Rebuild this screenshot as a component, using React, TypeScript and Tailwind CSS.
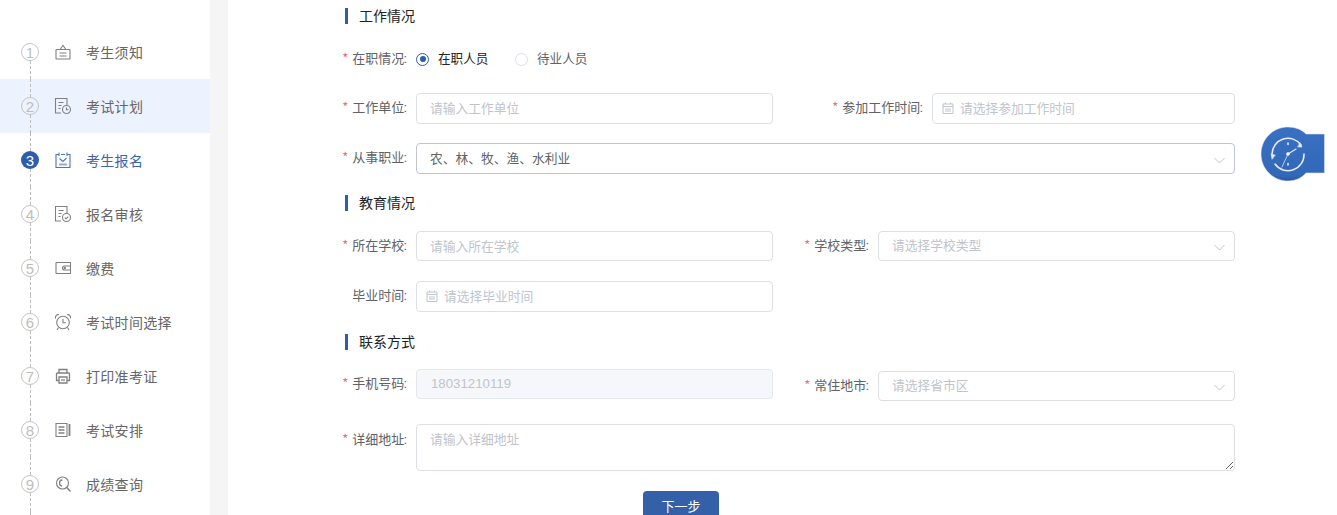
import React from 'react';

const FONT = 'font-["Microsoft_YaHei","Noto_Sans_CJK_SC","Noto_Sans",sans-serif]';

const iconProps = {
  width: 20,
  height: 20,
  viewBox: '0 0 20 20',
  fill: 'none',
  stroke: 'currentColor',
  strokeWidth: 1.1,
};

const NoticeIcon = () => (
  <svg {...iconProps}>
    <path d="M3.500 7.500h13a.5.5 0 0 1 .5.5v8.500a.5.5 0 0 1-.5.5h-13a.5.5 0 0 1-.5-.5V8a.5.5 0 0 1 .5-.5z" />
    <path d="M7 7.500 10 3.500l3 4M6.500 11h7M6.500 14h7" />
  </svg>
);

const PlanIcon = () => (
  <svg {...iconProps}>
    <path d="M8 17H2.500V2.500H14V9" />
    <path d="M5.500 6.500h5M5.500 9.500h3M5.500 12.500h2" />
    <circle cx="13.500" cy="13.500" r="4" />
    <path d="M13.500 11.500v2.200h2" />
  </svg>
);

const SignupIcon = () => (
  <svg {...iconProps}>
    <path d="M6 4.500H3v13h14v-13h-3M8 4.500h4" />
    <path d="M6 2.500v3.500M14 2.500v3.500" />
    <path d="m6.500 8.500 3.500 3 3.500-3.500" />
    <path d="M6 14.500h8" strokeWidth={2} opacity={0.6} />
  </svg>
);

const ReviewIcon = () => (
  <svg {...iconProps}>
    <path d="M8 17H2.500V2.500H14V9" />
    <path d="M5.500 6.500h5M5.500 9.500h3M5.500 12.500h2" />
    <circle cx="13.500" cy="13.500" r="4" />
    <path d="m11.800 13.600 1.300 1.200 2.200-2.200" />
  </svg>
);

const WalletIcon = () => (
  <svg {...iconProps}>
    <path d="M3.500 4.500h14v11h-14a.5.5 0 0 1-.5-.5V5a.5.5 0 0 1 .5-.5z" />
    <path d="M17.500 8h-6a2 2 0 0 0 0 4h6" />
    <circle cx="11.800" cy="10" r="0.700" />
  </svg>
);

const AlarmIcon = () => (
  <svg {...iconProps}>
    <circle cx="10" cy="10.500" r="6.300" />
    <path d="M10 7v3.800h3" />
    <path d="M2.500 6.500C2 4 4 2 6 2.800M17.500 6.500C18 4 16 2 14 2.800M5.500 15.500 4 18M14.500 15.500 16 18" />
  </svg>
);

const PrintIcon = () => (
  <svg {...iconProps} strokeWidth={1.3}>
    <path d="M6 7V3.500h8V7" />
    <path d="M6 14.500H3.500V8a1 1 0 0 1 1-1h11a1 1 0 0 1 1 1v6.500H14" />
    <path d="M6 11h8v6H6z" />
    <path d="M8 14h4" />
  </svg>
);

const ScheduleIcon = () => (
  <svg {...iconProps}>
    <path d="M3 3.500h11v13H3z" />
    <path d="M5.500 7h6M5.500 10h6M5.500 13h6" strokeWidth={1.4} />
    <path d="M16.500 4v12" strokeWidth={1.8} />
  </svg>
);

const SearchIcon = () => (
  <svg {...iconProps}>
    <circle cx="9.500" cy="9" r="6" />
    <path d="M13.800 13.500 17.500 17.500" strokeWidth={1.4} />
    <path d="M9.500 5.800A3.200 3.200 0 0 0 6.500 9c0 1.500 1 2.800 2.500 3.100" strokeWidth={1.3} />
  </svg>
);

const CalendarIcon = () => (
  <svg width="12" height="12" viewBox="0 0 12 12" fill="none" stroke="#c0c4cc" strokeWidth="1">
    <path d="M1 2h10v9.500H1zM1 4.500h10M3.500.5V2M8.500.5V2M3 7h6M3 9h6" />
  </svg>
);

const Chevron = () => (
  <svg className="mt-[3px]" width="11" height="7" viewBox="0 0 11 7" fill="none" stroke="#c0c4cc" strokeWidth="1">
    <path d="m.5 1 5 5 5-5" />
  </svg>
);

const steps = [
  { label: '考生须知', Icon: NoticeIcon },
  { label: '考试计划', Icon: PlanIcon, hover: true },
  { label: '考生报名', Icon: SignupIcon, active: true },
  { label: '报名审核', Icon: ReviewIcon },
  { label: '缴费', Icon: WalletIcon },
  { label: '考试时间选择', Icon: AlarmIcon },
  { label: '打印准考证', Icon: PrintIcon },
  { label: '考试安排', Icon: ScheduleIcon },
  { label: '成绩查询', Icon: SearchIcon },
];

const Sidebar = () => (
  <aside className="w-[210px] shrink-0 bg-white pt-[25px] flex flex-col">
    {steps.map(({ label, Icon, hover, active }, i) => (
      <div key={label} className={`h-[54px] shrink-0 flex items-center pl-[21px] ${hover ? 'bg-[#ecf2fe]' : ''}`}>
        <div className="w-[18px] h-full flex flex-col items-center">
          <div className={`flex-1 w-0 border-l border-dashed ${i === 0 ? 'border-transparent' : 'border-[#bbbbbb]'}`} />
          <div
            className={`w-[18px] h-[18px] shrink-0 rounded-full flex items-center justify-center font-['Liberation_Sans',sans-serif] text-[15px] leading-none ${
              active ? 'bg-[#2f5ea8] text-white' : 'border border-[#c4c4c4] text-[#bdbdbd]'
            }`}
          >
            {i + 1}
          </div>
          <div className="flex-1 w-0 border-l border-dashed border-[#bbbbbb]" />
        </div>
        <div className={`ml-[14px] w-[20px] flex justify-center ${active ? 'text-[#4a75bd]' : 'text-[#808080]'}`}>
          <Icon />
        </div>
        <span className={`ml-[13px] text-[14px] tracking-[0.3px] ${active ? 'text-[#3a64ac]' : 'text-[#666666]'}`}>
          {label}
        </span>
      </div>
    ))}
    <div className="flex-1 ml-[30px] w-0 border-l border-dashed border-[#bbbbbb]" />
  </aside>
);

const SectionTitle = ({ title, className = '' }: { title: string; className?: string }) => (
  <div className={`flex items-center h-4 ml-[117px] border-l-[3px] border-[#2f5ea8] pl-[11px] pb-[2px] text-[14px] text-[#222222] ${className}`}>
    {title}
  </div>
);

const Label = ({ text, required = true, className = '' }: { text: string; required?: boolean; className?: string }) => (
  <label className={`shrink-0 mr-[10px] pb-[2px] text-[13px] leading-5 text-[#606266] text-right whitespace-nowrap ${className}`}>
    {required && <span className="text-[#f56c6c] mr-[4px]">*</span>}
    {text}
    <span className="-mx-[1px] font-['Liberation_Sans',sans-serif]">:</span>
  </label>
);

const inputBase =
  'w-full h-full rounded border border-[#dcdfe6] bg-white pb-[2px] text-[12.75px] outline-none placeholder:text-[#c0c4cc]';

const TextInput = ({ placeholder }: { placeholder: string }) => (
  <input className={`${inputBase} px-[13px]`} placeholder={placeholder} />
);

const DateInput = ({ placeholder }: { placeholder: string }) => (
  <div className="relative w-full h-full">
    <input className={`${inputBase} pl-[27px] pr-[14px]`} placeholder={placeholder} />
    <span className="absolute left-[10px] top-[9px] flex">
      <CalendarIcon />
    </span>
  </div>
);

const SelectBox = ({ value, placeholder, dark }: { value?: string; placeholder?: string; dark?: boolean }) => (
  <div
    className={`w-full h-full rounded border flex items-center justify-between pl-[13px] pr-[9px] text-[12.75px] ${
      dark ? 'border-[#c0c4cc]' : 'border-[#dcdfe6]'
    } ${value ? 'text-[#606266]' : 'text-[#c0c4cc]'}`}
  >
    <span className="pb-[2px]">{value || placeholder}</span>
    <Chevron />
  </div>
);

const Radio = ({ label, checked }: { label: string; checked?: boolean }) => (
  <div className="flex items-center w-[99px]">
    <span
      className={`w-[13px] h-[13px] rounded-full border flex items-center justify-center ${
        checked ? 'border-[#2f5ea8]' : 'border-[#dcdfe6]'
      }`}
    >
      {checked && <span className="w-[6px] h-[6px] rounded-full bg-[#2f5ea8]" />}
    </span>
    <span className={`ml-[9px] pb-[2px] text-[12.6px] ${checked ? 'text-[#222222]' : 'text-[#606266]'}`}>{label}</span>
  </div>
);

const ClockBadge = () => (
  <svg className="absolute left-[1260px] top-[126px]" width="65" height="56" viewBox="0 0 65 56">
    <defs>
      <linearGradient id="badge" x1="0" y1="0" x2="0" y2="1">
        <stop offset="0" stopColor="#3a70c2" />
        <stop offset="0.9" stopColor="#3268b8" />
        <stop offset="1" stopColor="#2a57a0" />
      </linearGradient>
    </defs>
    <path
      d="M28 1c8 0 14 3 18 7h18.500v39H46c-4 5-11 8-18 8C13 55 1 43 1 28S13 1 28 1z"
      fill="url(#badge)"
      stroke="#dbe4f2"
      strokeWidth="0.6"
    />
    <g fill="none" stroke="#e6eefb" strokeLinecap="round">
      <path d="M12 28a16 16 0 0 1 29-9" strokeWidth="1.5" />
      <path d="M44 28a16 16 0 0 1-29 10" strokeWidth="1.5" />
      <path d="M40 17l2 4-4 0z" fill="#e6eefb" strokeWidth="0.6" />
      <path d="M12 33l-1-5 4 1z" fill="#e6eefb" strokeWidth="0.6" />
      <path d="m28 28 8-5" strokeWidth="1.1" />
      <path d="m28 28-6 13" strokeWidth="1" opacity="0.75" />
      <path d="M28 17v1.500M28 37.500V39" strokeWidth="1.6" />
    </g>
    <circle cx="28" cy="28" r="1.800" fill="#ffffff" />
  </svg>
);

export default function App() {
  return (
    <div className={`relative h-[515px] overflow-hidden flex bg-white ${FONT}`}>
      <Sidebar />
      <div className="w-[18px] shrink-0 bg-[#f5f5f5]" />

      <main className="flex-1 min-w-0 pt-2">
        <div className="w-[1007px]">
          <SectionTitle title="工作情况" />

          <div className="flex items-center h-5 mt-[25px]">
            <Label text="在职情况" className="w-[178px]" />
            <Radio label="在职人员" checked />
            <Radio label="待业人员" />
          </div>

          <div className="flex items-center h-[31px] mt-[24px]">
            <Label text="工作单位" className="w-[178px]" />
            <div className="w-[357px] h-full">
              <TextInput placeholder="请输入工作单位" />
            </div>
            <div className="ml-auto flex items-center h-full">
              <Label text="参加工作时间" />
              <div className="w-[303px] h-full">
                <DateInput placeholder="请选择参加工作时间" />
              </div>
            </div>
          </div>

          <div className="flex items-center h-[31px] mt-[19px]">
            <Label text="从事职业" className="w-[178px]" />
            <div className="flex-1 h-full">
              <SelectBox value="农、林、牧、渔、水利业" dark />
            </div>
          </div>

          <SectionTitle title="教育情况" className="mt-[21px]" />

          <div className="flex items-center h-[30px] mt-[20px]">
            <Label text="所在学校" className="w-[178px]" />
            <div className="w-[357px] h-full">
              <TextInput placeholder="请输入所在学校" />
            </div>
            <div className="ml-auto flex items-center h-full">
              <Label text="学校类型" />
              <div className="w-[357px] h-full">
                <SelectBox placeholder="请选择学校类型" />
              </div>
            </div>
          </div>

          <div className="flex items-center h-[31px] mt-[20px]">
            <Label text="毕业时间" required={false} className="w-[178px]" />
            <div className="w-[357px] h-full">
              <DateInput placeholder="请选择毕业时间" />
            </div>
          </div>

          <SectionTitle title="联系方式" className="mt-[22px]" />

          <div className="flex items-start h-[32px] mt-[19px]">
            <div className="flex items-center h-[30px]">
              <Label text="手机号码" className="w-[178px]" />
              <input
                disabled
                value="18031210119"
                className="w-[357px] h-full rounded border border-[#e4e7ed] bg-[#f5f7fa] px-[14px] pb-[2px] font-['Liberation_Sans',sans-serif] text-[13.25px] text-[#c0c4cc]"
              />
            </div>
            <div className="ml-auto mt-[2px] flex items-center h-[30px]">
              <Label text="常住地市" />
              <div className="w-[357px] h-full">
                <SelectBox placeholder="请选择省市区" />
              </div>
            </div>
          </div>

          <div className="flex items-start h-[47px] mt-[23px]">
            <Label text="详细地址" className="w-[178px] mt-[5px]" />
            <textarea
              className="flex-1 h-full rounded border border-[#dcdfe6] px-[13px] py-[4px] text-[12.75px] leading-5 outline-none placeholder:text-[#c0c4cc]"
              placeholder="请输入详细地址"
            />
          </div>

          <button className="block mt-[20px] ml-[415px] w-[76px] h-[32px] rounded bg-[#3360a9] pb-[2px] text-[13px] text-white">
            下一步
          </button>
        </div>
      </main>

      <ClockBadge />
    </div>
  );
}
